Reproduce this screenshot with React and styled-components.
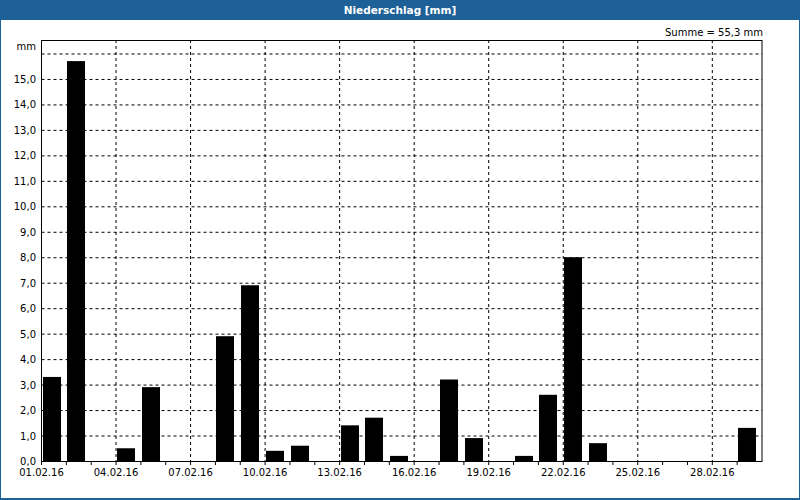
import React from 'react'
import styled, { createGlobalStyle } from "styled-components";

const Global = createGlobalStyle`
  body { margin:0; font-family:"DejaVu Sans", Verdana, sans-serif; }
`;

const Frame = styled.div`
  width:800px;
  height:500px;
  box-sizing:border-box;
  display:flex;
  flex-direction:column;
  background:#fff;
  border:1px solid #1e5f94;
  border-top:none;
  border-bottom-width:2px;
`;

const Header = styled.div`
  height:20px;
  background:#1e6198;
  color:#fff;
  font-size:10.5px;
  font-weight:bold;
  display:flex;
  align-items:center;
  justify-content:center;
  margin:0 -1px;
`;

const Chart = styled.svg`
  display:block;
  font-family:"DejaVu Sans", Verdana, sans-serif;
  font-size:10px;
`;

const data = [3.3,15.7,0,0.5,2.9,0,0,4.9,6.9,0.4,0.6,0,1.4,1.7,0.2,0,3.2,0.9,0,0.2,2.6,8.0,0.7,0,0,0,0,0,1.3];

const L = 40.5, R = 761, T = 40, B = 461;
const slot = (R - L) / 29;
const unit = 25.47;

function App() {
  const yTicks = Array.from({ length: 17 }, (_, i) => i);
  return (
    <Frame>
      <Global />
      <Header>Niederschlag [mm]</Header>
      <Chart width="798" height="478" viewBox="0 20 798 478">
        <text x="762" y="36" textAnchor="end" fill="#000">Summe = 55,3 mm</text>
        <text x="35" y="50" textAnchor="end">mm</text>
        {yTicks.slice(1).map(v => (
          <line key={v} x1={L} x2={R} y1={B - v * unit + .5} y2={B - v * unit + .5} stroke="#000" strokeDasharray="3 3" />
        ))}
        {[3,6,9,12,15,18,21,24,27].map(d => (
          <line key={d} x1={L + d * slot} x2={L + d * slot} y1={T} y2={B} stroke="#000" strokeDasharray="3 3" />
        ))}
        {data.map((v, i) => v > 0 && (
          <rect key={i} x={Math.round(L + i * slot) + 1} width="18" y={B - v * unit} height={v * unit} fill="#000" />
        ))}
        <rect x={L} y={T + .5} width={R - L} height={B - T} fill="none" stroke="#000" />
        {yTicks.slice(0, 16).map(v => (
          <text key={v} x="35" y={B - v * unit + 4} textAnchor="end">{v.toFixed(1).replace('.', ',')}</text>
        ))}
        {data.map((_, i) => (
          <line key={i} x1={L + i * slot} x2={L + i * slot} y1={B} y2={B + 4} stroke="#000" />
        ))}
        {[0,3,6,9,12,15,18,21,24,27].map(d => (
          <text key={d} x={L + d * slot} y={B + 15} textAnchor="middle">
            {String(d + 1).padStart(2, '0')}.02.16
          </text>
        ))}
      </Chart>
    </Frame>
  )
}

export default App
